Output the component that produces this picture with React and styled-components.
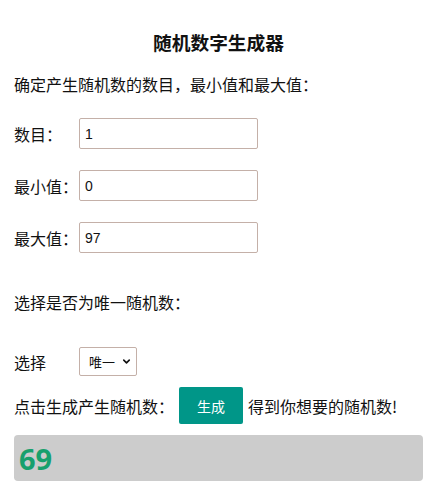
import styled, { createGlobalStyle } from 'styled-components';
import { ChevronDown } from 'lucide-react';

const GlobalStyle = createGlobalStyle`
    body {
        margin: 0;
        background: #ffffff;
        color: #111111;
        font-family: "Microsoft YaHei", "Noto Sans CJK SC", "Noto Sans", sans-serif;
        font-size: 16px;
    }
`;

const Page = styled.div`
    padding: 0 6px 0 14px;
`;

const Title = styled.h3`
    margin: 30px 0 0;
    font-size: 18.72px;
    line-height: 24px;
    font-weight: 700;
    text-align: center;
`;

const Paragraph = styled.p`
    margin: ${({ $top }) => $top}px 0 0;
    line-height: 24px;
`;

const FieldRow = styled.div`
    display: flex;
    align-items: center;
    margin-top: ${({ $top }) => $top}px;
`;

const Label = styled.label`
    width: 65px;
    line-height: 24px;
`;

const TextInput = styled.input`
    box-sizing: border-box;
    width: 179px;
    height: 31px;
    padding: 0 5px;
    border: 1px solid #c4b0a8;
    border-radius: 2px;
    font-family: "Liberation Sans", Arial, sans-serif;
    font-size: 14px;
    color: #111;
    outline: none;
`;

const SelectWrap = styled.div`
    position: relative;
    width: 58px;
    height: 29px;
`;

const Select = styled.select`
    appearance: none;
    box-sizing: border-box;
    width: 100%;
    height: 100%;
    padding: 0 0 0 9px;
    border: 1px solid #c4b0a8;
    border-radius: 2px;
    background: #fff;
    font-family: "Noto Sans CJK SC", sans-serif;
    font-size: 13px;
    color: #111;
    outline: none;
`;

const Chevron = styled(ChevronDown)`
    position: absolute;
    right: 5px;
    top: 9px;
    pointer-events: none;
`;

const ActionRow = styled.div`
    display: flex;
    align-items: center;
    margin-top: 11px;
    line-height: 24px;
`;

const GenerateButton = styled.button`
    width: 64px;
    height: 37px;
    margin: 0 5px;
    border: none;
    border-radius: 2px;
    background: #009688;
    color: #fff;
    font-family: "Noto Sans CJK SC", sans-serif;
    font-size: 14px;
    cursor: pointer;
`;

const ResultBox = styled.div`
    box-sizing: border-box;
    height: 46px;
    margin-top: 11px;
    padding-left: 5px;
    display: flex;
    align-items: center;
    background: #cccccc;
    border-radius: 4px;
`;

const ResultNumber = styled.span`
    font-family: "Noto Sans", "Open Sans", sans-serif;
    font-size: 29px;
    font-weight: 700;
    color: #17a06d;
`;

const fields = [
    { label: '数目：', value: '1', top: 22 },
    { label: '最小值：', value: '0', top: 21 },
    { label: '最大值：', value: '97', top: 21 },
];

const App = () => {
    return (
        <Page>
            <GlobalStyle />
            <Title>随机数字生成器</Title>
            <Paragraph $top={18}>确定产生随机数的数目，最小值和最大值：</Paragraph>
            {fields.map((field) => (
                <FieldRow key={field.label} $top={field.top}>
                    <Label>{field.label}</Label>
                    <TextInput defaultValue={field.value} />
                </FieldRow>
            ))}
            <Paragraph $top={37}>选择是否为唯一随机数：</Paragraph>
            <FieldRow $top={33}>
                <Label>选择</Label>
                <SelectWrap>
                    <Select defaultValue="unique">
                        <option value="unique">唯一</option>
                        <option value="repeat">重复</option>
                    </Select>
                    <Chevron size={11} strokeWidth={3.5} color="#111" />
                </SelectWrap>
            </FieldRow>
            <ActionRow>
                <span>点击生成产生随机数：</span>
                <GenerateButton>生成</GenerateButton>
                <span>得到你想要的随机数!</span>
            </ActionRow>
            <ResultBox>
                <ResultNumber>69</ResultNumber>
            </ResultBox>
        </Page>
    );
};

export default App;
